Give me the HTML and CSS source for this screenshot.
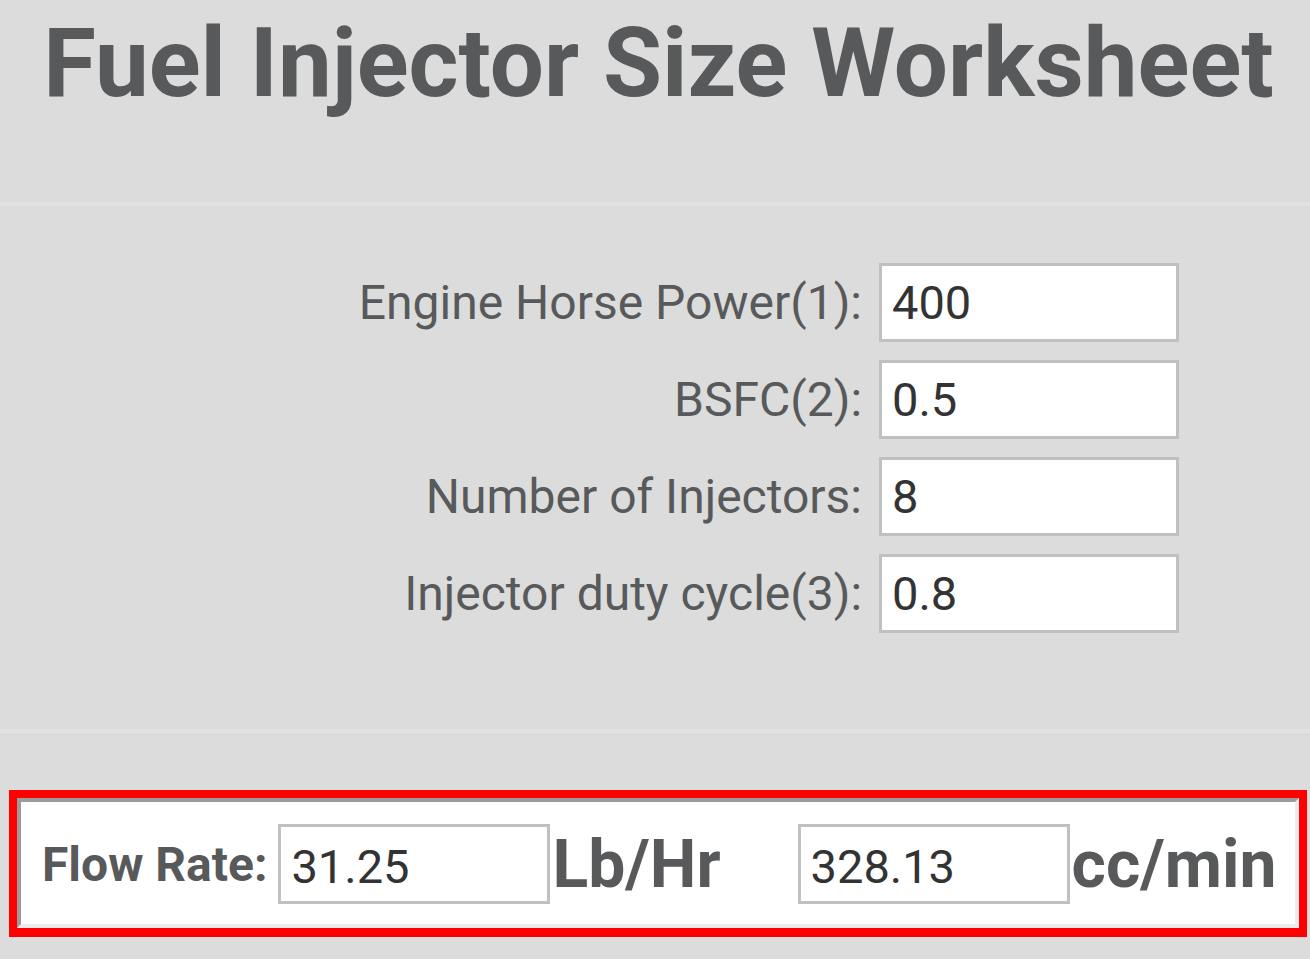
FILE: index.html
```html
<!DOCTYPE html>
<html>
<head>
<meta charset="utf-8">
<link rel="stylesheet" href="styles.css">
</head>
<body>
<div class="page">
  <h1 class="title">Fuel Injector Size Worksheet</h1>
  <div class="rule"></div>
  <div class="form">
    <label class="label">Engine Horse Power(1):</label>
    <div class="field">400</div>
    <label class="label">BSFC(2):</label>
    <div class="field">0.5</div>
    <label class="label">Number of Injectors:</label>
    <div class="field">8</div>
    <label class="label">Injector duty cycle(3):</label>
    <div class="field">0.8</div>
  </div>
  <div class="rule rule-bottom"></div>
  <div class="result">
    <div class="result-inner">
      <span class="flow-label">Flow Rate:</span>
      <div class="out">31.25</div>
      <span class="unit">Lb/Hr</span>
      <div class="out out-second">328.13</div>
      <span class="unit">cc/min</span>
    </div>
  </div>
</div>
</body>
</html>
```
FILE: styles.css
```css
html, body {
  margin: 0;
  padding: 0;
  background: #dcdcdc;
}
body {
  font-family: Roboto, "Liberation Sans", sans-serif;
  color: #58595b;
  width: 1310px;
  height: 959px;
  overflow: hidden;
}
.page {
  display: flex;
  flex-direction: column;
}
.page > * {
  flex-shrink: 0;
}
.title {
  margin: 0;
  padding-top: 13px;
  padding-left: 7px;
  height: 190px;
  box-sizing: border-box;
  text-align: center;
  font-size: 96px;
  font-weight: 700;
  line-height: 100px;
  color: #58595b;
}
.rule {
  height: 4px;
  background: #e2e2e2;
  margin-top: 12px;
}
.rule-bottom {
  margin-top: 96px;
}
.form {
  display: grid;
  grid-template-columns: 1fr 300px;
  column-gap: 17px;
  row-gap: 18px;
  align-items: center;
  padding-right: 131px;
  margin-top: 57px;
}
.label {
  text-align: right;
  font-size: 48px;
  color: #58595b;
}
.field {
  height: 79px;
  box-sizing: border-box;
  border: 3px solid #c0c0c0;
  background: #fff;
  font-size: 47px;
  color: #333;
  padding-left: 10px;
  display: flex;
  align-items: center;
}
.result {
  margin: 57px 3px 0 9px;
  border: 8px solid #ff0000;
  border-bottom-width: 9px;
}
.result-inner {
  height: 130px;
  box-sizing: border-box;
  border: 4px solid;
  border-color: #9b9b9b #ececec #ececec #9b9b9b;
  background: #fff;
  display: flex;
  align-items: center;
  padding-left: 21px;
  padding-top: 2px;
}
.flow-label {
  font-size: 48px;
  font-weight: 700;
  margin-right: 11px;
}
.out {
  width: 272px;
  height: 80px;
  box-sizing: border-box;
  border: 3px solid #c0c0c0;
  background: #fff;
  font-size: 47px;
  color: #333;
  padding-left: 10px;
  display: flex;
  align-items: center;
  padding-top: 4px;
}
.out-second {
  margin-left: 77px;
}
.unit {
  font-size: 66px;
  font-weight: 700;
  margin-left: 2px;
}
```
